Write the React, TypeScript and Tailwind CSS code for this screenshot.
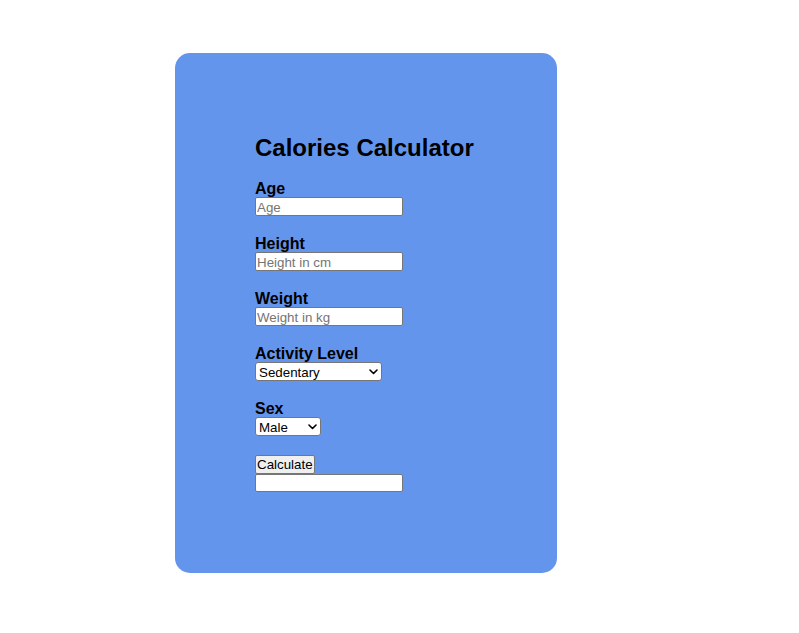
import React from "react";

const Chevron = () => (
  <svg
    className="pointer-events-none absolute right-[4px] top-1/2 -translate-y-1/2"
    width="9"
    height="6"
    viewBox="0 0 9 6"
    fill="none"
  >
    <path d="M1 1l3.5 3.5L8 1" stroke="#000" strokeWidth="1.6" strokeLinecap="round" strokeLinejoin="round" />
  </svg>
);

const Label = ({ text }: { text: string }) => (
  <label className="block h-[18px] pt-[1px] text-[16px] leading-[18px] font-bold">{text}</label>
);

const Field = ({ label, placeholder }: { label: string; placeholder: string }) => (
  <div className="mb-[18px]">
    <Label text={label} />
    <input
      type="number"
      placeholder={placeholder}
      className="block w-[148px] h-[19px] bg-white border border-[#767676] rounded-[2px] px-[1px] pt-[2px] text-[13.33px] leading-[15px] text-black placeholder:text-[#757575] outline-none"
    />
  </div>
);

const Select = ({ label, width, options }: { label: string; width: string; options: string[] }) => (
  <div className="mb-[18px]">
    <Label text={label} />
    <div className={`relative h-[19px] ${width}`}>
      <select className="block w-full h-full appearance-none bg-white border border-[#767676] rounded-[3px] pl-[3px] text-[13.33px] text-black outline-none">
        {options.map((o) => (
          <option key={o}>{o}</option>
        ))}
      </select>
      <Chevron />
    </div>
  </div>
);

const App = () => {
  return (
    <div className="min-h-[633px] bg-white pt-[53px] pl-[175px] text-black font-['Liberation_Sans',Arial,sans-serif]">
      <div className="w-[382px] h-[520px] rounded-[15px] bg-[#6495ED] pt-[80px] pl-[80px]">
        {/* Title */}
        <h2 className="h-[28px] pt-[1px] text-[24px] leading-[28px] font-bold mb-[18px]">Calories Calculator</h2>

        <Field label="Age" placeholder="Age" />
        <Field label="Height" placeholder="Height in cm" />
        <Field label="Weight" placeholder="Weight in kg" />

        <Select
          label="Activity Level"
          width="w-[127px]"
          options={["Sedentary", "Lightly active", "Moderately active", "Very active"]}
        />
        <Select label="Sex" width="w-[66px]" options={["Male", "Female"]} />

        {/* Calculate */}
        <button className="block mt-[19px] h-[19px] bg-[#efefef] border border-[#767676] rounded-[2px] px-[1px] text-[13.33px] leading-[15px] text-black">
          Calculate
        </button>
        <input
          readOnly
          className="block w-[148px] h-[18px] bg-white border border-[#767676] rounded-[2px] outline-none"
        />
      </div>
    </div>
  );
};

export default App;
